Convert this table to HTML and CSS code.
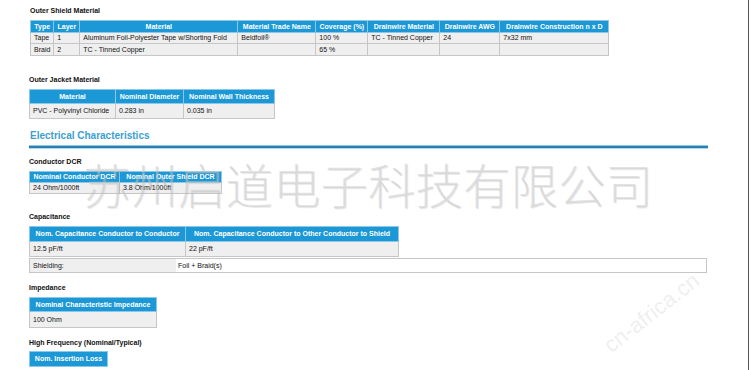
FILE: index.html
```html
<!DOCTYPE html>
<html>
<head>
<meta charset="utf-8">
<link rel="stylesheet" href="styles.css">
</head>
<body>
<div class="page">
  <div class="content">
    <div class="title t1">Outer Shield Material</div>
    <table class="grid g1">
      <colgroup>
        <col style="width:22px"><col style="width:26px"><col style="width:158px"><col style="width:78px">
        <col style="width:52px"><col style="width:72px"><col style="width:60px"><col style="width:109px">
      </colgroup>
      <tr class="head"><th>Type</th><th>Layer</th><th>Material</th><th>Material Trade Name</th><th>Coverage (%)</th><th>Drainwire Material</th><th>Drainwire AWG</th><th>Drainwire Construction n x D</th></tr>
      <tr><td>Tape</td><td>1</td><td>Aluminum Foil-Polyester Tape w/Shorting Fold</td><td>Beldfoil®</td><td>100 %</td><td>TC - Tinned Copper</td><td>24</td><td>7x32 mm</td></tr>
      <tr><td>Braid</td><td>2</td><td>TC - Tinned Copper</td><td></td><td>65 %</td><td></td><td></td><td></td></tr>
    </table>

    <div class="title t2">Outer Jacket Material</div>
    <table class="grid g2">
      <colgroup><col style="width:86px"><col style="width:68px"><col style="width:91px"></colgroup>
      <tr class="head"><th>Material</th><th>Nominal Diameter</th><th>Nominal Wall Thickness</th></tr>
      <tr><td>PVC - Polyvinyl Chloride</td><td>0.283 in</td><td>0.035 in</td></tr>
    </table>

    <div class="section-head">Electrical Characteristics</div>
    <div class="rule"></div>

    <div class="title t3">Conductor DCR</div>
    <table class="grid g3">
      <colgroup><col style="width:90px"><col style="width:102px"></colgroup>
      <tr class="head"><th>Nominal Conductor DCR</th><th>Nominal Outer Shield DCR</th></tr>
      <tr><td>24 Ohm/1000ft</td><td>3.8 Ohm/1000ft</td></tr>
    </table>

    <div class="title t4">Capacitance</div>
    <table class="grid g4">
      <colgroup><col style="width:156px"><col style="width:213px"></colgroup>
      <tr class="head"><th>Nom. Capacitance Conductor to Conductor</th><th>Nom. Capacitance Conductor to Other Conductor to Shield</th></tr>
      <tr><td>12.5 pF/ft</td><td>22 pF/ft</td></tr>
    </table>
    <div class="shield-row">
      <div class="shield-label">Shielding:</div>
      <div class="shield-value">Foil + Braid(s)</div>
    </div>

    <div class="title t5">Impedance</div>
    <table class="grid g5">
      <colgroup><col style="width:127px"></colgroup>
      <tr class="head"><th>Nominal Characteristic Impedance</th></tr>
      <tr><td>100 Ohm</td></tr>
    </table>

    <div class="title t6">High Frequency (Nominal/Typical)</div>
    <table class="grid g6">
      <colgroup><col style="width:78px"></colgroup>
      <tr class="head"><th>Nom. Insertion Loss</th></tr>
    </table>
  </div>

  <div class="watermark">苏州启道电子科技有限公司</div>
  <div class="wm-small wm-a">cn-africa.cn</div>
  <div class="edge"></div>
</div>
</body>
</html>
```
FILE: styles.css
```css
html, body {
  margin: 0;
  padding: 0;
  background: #ffffff;
}
.page {
  position: relative;
  width: 750px;
  height: 370px;
  overflow: hidden;
  font-family: "Liberation Sans", Arial, sans-serif;
  color: #111;
}
.content {
  display: flex;
  flex-direction: column;
  align-items: flex-start;
  padding-left: 29px;
  padding-top: 6px;
}
.title {
  font-size: 7px;
  font-weight: bold;
  line-height: 10px;
  height: 10px;
  margin-bottom: 4px;
}
.t1 { margin-left: 1px; }
.t2 { margin-top: 19px; }
.t3 { margin-top: 9px; margin-bottom: 4px; }
.t4 { margin-top: 18px; margin-bottom: 4px; }
.t5 { margin-top: 10px; margin-bottom: 4px; }
.t6 { margin-top: 10px; margin-bottom: 3px; }

.grid {
  border-collapse: collapse;
  table-layout: fixed;
  font-size: 7px;
  line-height: 8px;
}
.g1 { margin-left: 1px; }
.grid th {
  background: #1c98d6;
  color: #ffffff;
  font-weight: bold;
  text-align: center;
  border: 1px solid #8cc8e8;
  padding: 0 2px;
  white-space: nowrap;
  overflow: hidden;
}
.grid td {
  background: #efefef;
  border: 1px solid #c6c6c6;
  padding: 0 3px;
  white-space: nowrap;
  overflow: hidden;
}
.g1 th { height: 11px; }
.g1 td { height: 10px; }
.g1 tr:last-child td { height: 11px; }
.g2 th { height: 13px; }
.g2 td { height: 14px; }
.g3 th { height: 10px; }
.g3 td { height: 10px; }
.g4 th { height: 14px; }
.g4 td { height: 14px; }
.g5 th { height: 13px; }
.g5 td { height: 15px; }
.g6 th { height: 14px; }

.section-head {
  margin-top: 11px;
  font-size: 10px;
  line-height: 12px;
  font-weight: bold;
  color: #3b9fcf;
  margin-left: 1px;
}
.rule {
  margin-top: 3px;
  width: 679px;
  height: 2px;
  background: #2a7fae;
  border-top: 1px solid #8ccbe6;
  box-shadow: 0 1px 0 #a9d9ee;
}
.shield-row {
  margin-top: 1px;
  display: flex;
  width: 676px;
  height: 13px;
  border: 1px solid #c6c6c6;
  font-size: 7px;
  line-height: 13px;
}
.shield-label {
  width: 143px;
  padding-left: 3px;
  background: #efefef;
}
.shield-value {
  flex: 1;
  background: #ffffff;
  padding-left: 2px;
}

.watermark {
  position: absolute;
  left: 83px;
  top: 154px;
  font-family: "Noto Sans CJK SC", sans-serif;
  font-size: 47.5px;
  font-weight: 300;
  line-height: 60px;
  color: rgba(200, 200, 200, 0.5);
  text-shadow: 1px 1px 0 rgba(150, 150, 150, 0.2);
  white-space: nowrap;
  pointer-events: none;
}
.wm-small {
  position: absolute;
  font-family: "Liberation Sans", Arial, sans-serif;
  font-size: 22px;
  color: rgba(200, 200, 200, 0.3);
  transform: rotate(-38deg);
  white-space: nowrap;
  pointer-events: none;
}
.wm-a { left: 595px; top: 300px; }
.edge {
  position: absolute;
  right: 1px;
  top: 0;
  width: 1px;
  height: 370px;
  background: #555555;
}
```
